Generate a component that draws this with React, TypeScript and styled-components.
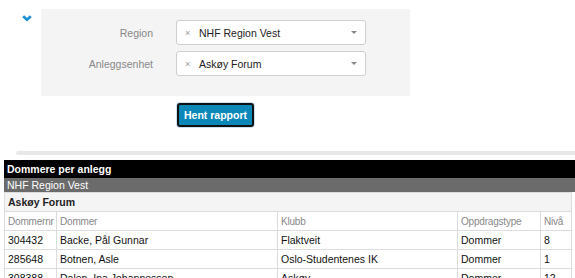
import styled, { createGlobalStyle } from "styled-components";

const GlobalStyle = createGlobalStyle`
  body {
    margin: 0;
    background: #fff;
    font-family: "Liberation Sans", Arial, sans-serif;
    font-size: 10.5px;
    color: #222;
  }
`;

const Page = styled.div`
  padding-top: 9px;
  width: 575px;
  overflow: hidden;
`;

const FilterArea = styled.div`
  display: flex;
  align-items: flex-start;
  padding-left: 22px;
`;

const Toggle = styled.div`
  width: 19px;
  padding-top: 3px;
  color: #1a8fd6;
`;

const Panel = styled.div`
  width: 369px;
  box-sizing: border-box;
  background: #f4f4f4;
  padding: 11px 44px 20px 0;
  display: grid;
  grid-template-columns: 112px 190px;
  column-gap: 23px;
  row-gap: 6px;
  align-items: center;
`;

const Label = styled.label`
  text-align: right;
  color: #888;
`;

const Select = styled.div`
  height: 25px;
  box-sizing: border-box;
  background: #fff;
  border: 1px solid #cfcfcf;
  border-radius: 3px;
  display: flex;
  align-items: center;
  padding: 0 8px 0 8px;
  color: #222;
`;

const Clear = styled.span`
  color: #999;
  font-size: 9px;
  width: 14px;
`;

const Value = styled.span`
  flex: 1;
`;

const Caret = styled.span`
  width: 0;
  height: 0;
  border-left: 3.5px solid transparent;
  border-right: 3.5px solid transparent;
  border-top: 3.5px solid #888;
`;

const ButtonRow = styled.div`
  padding: 7px 0 0 177px;
`;

const Button = styled.button`
  width: 77px;
  height: 24px;
  box-sizing: border-box;
  background: #0b87b8;
  border: 2px solid #111;
  border-radius: 3px;
  color: #fff;
  font-family: "Liberation Sans", Arial, sans-serif;
  font-weight: bold;
  font-size: 10.5px;
  padding: 0;
  box-shadow: 0 0 0 1px rgba(150, 200, 230, 0.5);
`;

const Divider = styled.div`
  margin: 24px 0 0 16px;
  height: 4px;
  background: #e8e8e8;
  border-radius: 2px 0 0 2px;
`;

const Report = styled.div`
  margin: 5px 0 0 4px;
`;

const Title = styled.div`
  background: #000;
  color: #fff;
  font-weight: bold;
  padding: 0 3px;
  height: 18px;
  line-height: 18px;
`;

const SubTitle = styled.div`
  background: #6b6b6b;
  color: #fff;
  padding: 0 3px;
  height: 14px;
  line-height: 15px;
`;

const Table = styled.table`
  width: 567px;
  border-collapse: collapse;
  table-layout: fixed;
`;

const Cell = styled.td<{ $head?: boolean }>`
  border: 1px solid #dcdcdc;
  height: 18px;
  padding: 0 1px 0 3px;
  white-space: nowrap;
  overflow: hidden;
  color: ${(p) => (p.$head ? "#888" : "#111")};
  font-size: ${(p) => (p.$head ? "10px" : "10.5px")};
  letter-spacing: ${(p) => (p.$head ? "-0.2px" : "0")};
`;

const GroupCell = styled.td`
  border: 1px solid #dcdcdc;
  background: #f4f4f4;
  font-weight: bold;
  height: 18px;
  padding: 0 3px;
`;

const Chevron = () => (
  <svg width="10" height="7" viewBox="0 0 10 7">
    <polyline points="1.2,1.2 5,4.8 8.8,1.2" fill="none" stroke="currentColor" strokeWidth="2.6" />
  </svg>
);

const rows = [
  ["304432", "Backe, Pål Gunnar", "Flaktveit", "Dommer", "8"],
  ["285648", "Botnen, Asle", "Oslo-Studentenes IK", "Dommer", "1"],
  ["308388", "Dalen, Ina Johannessen", "Askøy", "Dommer", "12"],
];

const widths = [52, 221, 180, 83, 31];

export default function App() {
  return (
    <Page>
      <GlobalStyle />
      <FilterArea>
        <Toggle>
          <Chevron />
        </Toggle>
        <Panel>
          <Label>Region</Label>
          <Select>
            <Clear>×</Clear>
            <Value>NHF Region Vest</Value>
            <Caret />
          </Select>
          <Label>Anleggsenhet</Label>
          <Select>
            <Clear>×</Clear>
            <Value>Askøy Forum</Value>
            <Caret />
          </Select>
        </Panel>
      </FilterArea>
      <ButtonRow>
        <Button>Hent rapport</Button>
      </ButtonRow>
      <Divider />
      <Report>
        <Title>Dommere per anlegg</Title>
        <SubTitle>NHF Region Vest</SubTitle>
        <Table>
          <colgroup>
            {widths.map((w, i) => (
              <col key={i} style={{ width: w }} />
            ))}
          </colgroup>
          <tbody>
            <tr>
              <GroupCell colSpan={5}>Askøy Forum</GroupCell>
            </tr>
            <tr>
              {["Dommernr", "Dommer", "Klubb", "Oppdragstype", "Nivå"].map((h) => (
                <Cell key={h} $head>
                  {h}
                </Cell>
              ))}
            </tr>
            {rows.map((r) => (
              <tr key={r[0]}>
                {r.map((c, i) => (
                  <Cell key={i}>{c}</Cell>
                ))}
              </tr>
            ))}
          </tbody>
        </Table>
      </Report>
    </Page>
  );
}
